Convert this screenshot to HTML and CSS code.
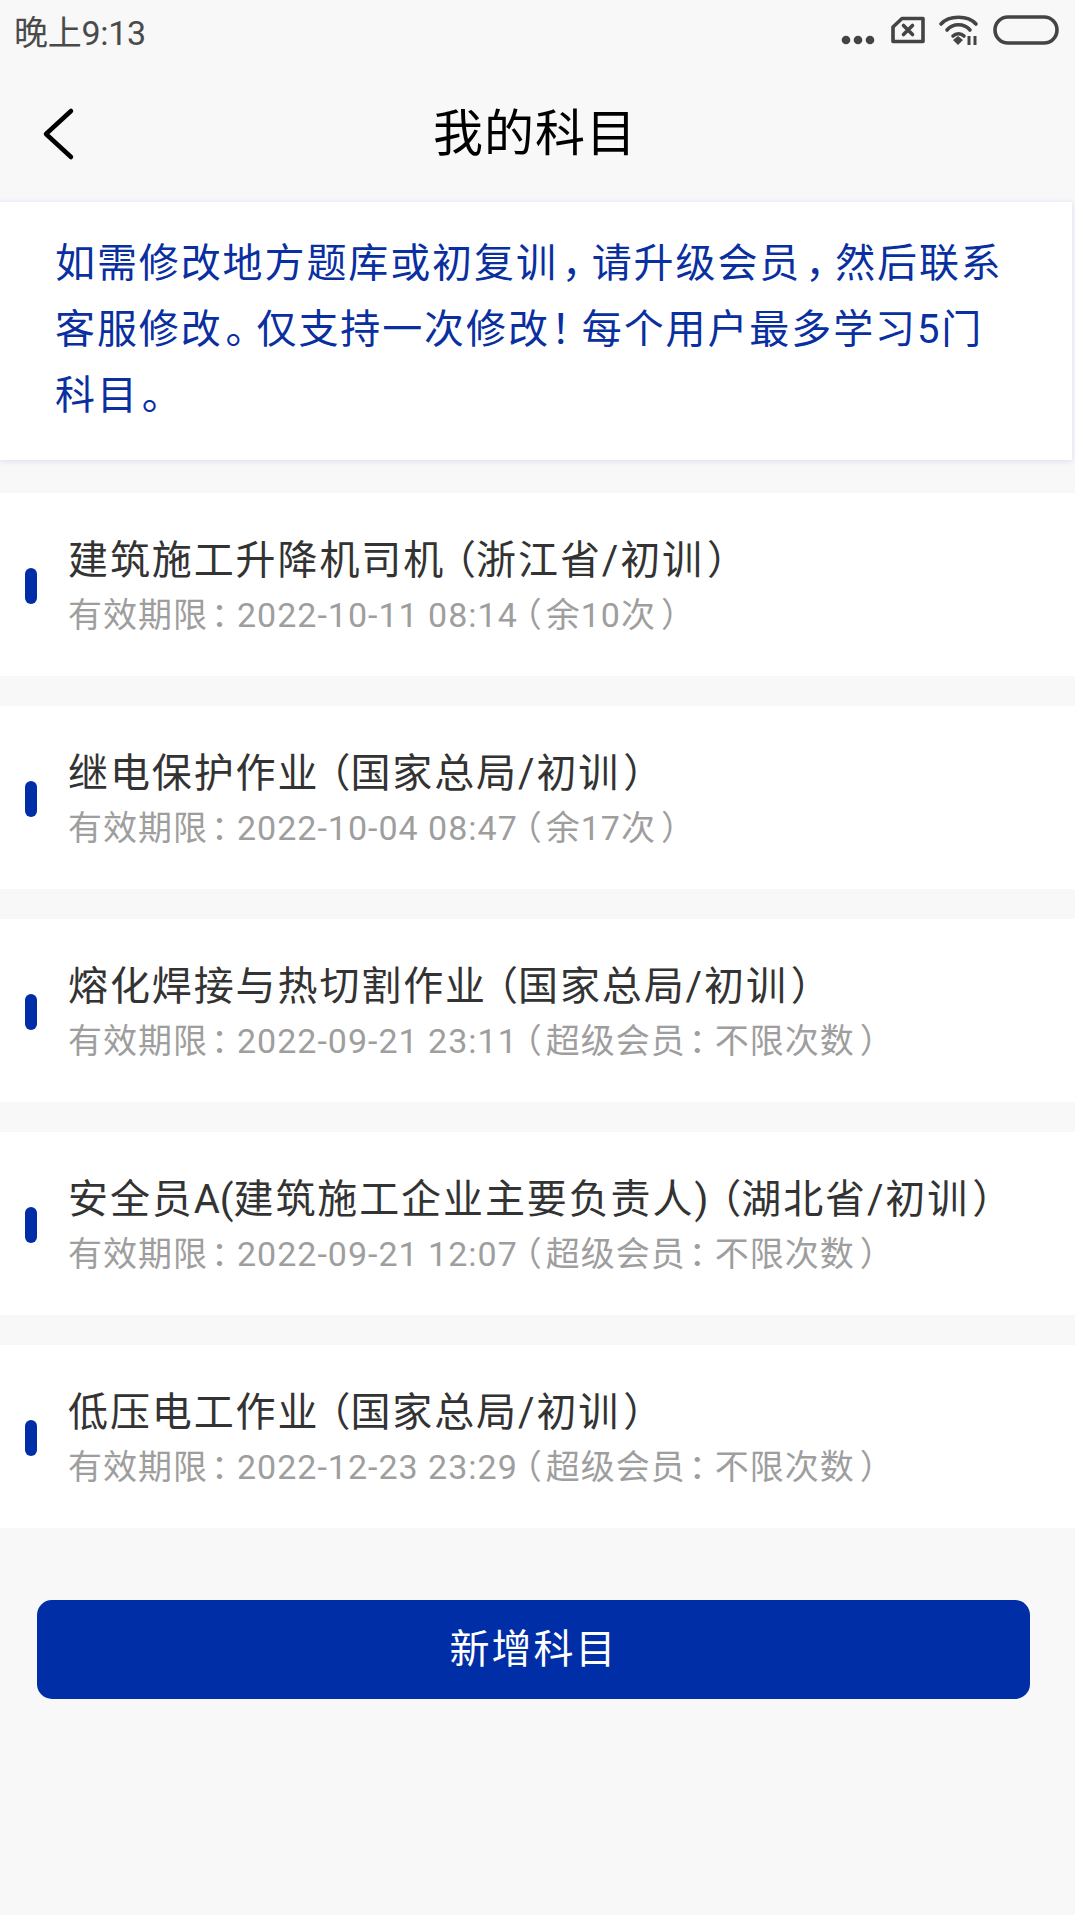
FILE: index.html
```html
<!DOCTYPE html>
<html lang="zh-CN">
<head>
<meta charset="utf-8">
<title>我的科目</title>
<link rel="stylesheet" href="styles.css">
</head>
<body>
<div class="status">
  <span class="time">晚上9:13</span>
  <div class="status-icons">
    <svg class="ic-dots" width="36" height="12" viewBox="0 0 36 12"><circle cx="6" cy="6" r="4.3"/><circle cx="18" cy="6" r="4.3"/><circle cx="30" cy="6" r="4.3"/></svg>
    <svg class="ic-sim" width="36" height="28" viewBox="0 0 36 28"><path class="ln" d="M12 2.5H33V25.5H3V11Z"/><path class="ln" d="M13.5 9.5L22.5 18.5M22.5 9.5L13.5 18.5"/></svg>
    <svg class="ic-wifi" width="42" height="32" viewBox="0 0 42 32"><path class="ln" d="M3 10C11 1 30 1 38 10M9 16C15 9 26 9 32 16M15 22C18 19 23 19 26 22"/><path class="fl" d="M15 26L20 22L25 26L20 31Z"/><path class="thin" d="M31 22V31M37 22V31"/></svg>
    <svg class="ic-batt" width="66" height="30" viewBox="0 0 66 30"><rect class="ln" x="2" y="2" width="62" height="26" rx="13"/></svg>
  </div>
</div>
<header class="nav">
  <svg class="back" width="34" height="54" viewBox="0 0 34 54"><path d="M30 4L5 27L30 50"/></svg>
  <h1 class="nav-title">我的科目</h1>
</header>
<main>
  <section class="notice">如需修改地方题库或初复训<span class="comma">，</span>请升级会员<span class="comma">，</span>然后联系客服修改<span class="stop">。</span>仅支持一次修改<span class="bang">！</span>每个用户最多学习5门科目<span class="stop">。</span></section>
  <ul class="list">
    <li class="item"><i class="mark"></i><div class="text"><div class="name">建筑施工升降机司机<span class="pl">（</span>浙江省/初训<span class="pr">）</span></div><div class="meta">有效期限<span class="colon">：</span>2022-10-11 08:14<span class="pl">（</span>余10次<span class="pr">）</span></div></div></li>
    <li class="item"><i class="mark"></i><div class="text"><div class="name">继电保护作业<span class="pl">（</span>国家总局/初训<span class="pr">）</span></div><div class="meta">有效期限<span class="colon">：</span>2022-10-04 08:47<span class="pl">（</span>余17次<span class="pr">）</span></div></div></li>
    <li class="item"><i class="mark"></i><div class="text"><div class="name">熔化焊接与热切割作业<span class="pl">（</span>国家总局/初训<span class="pr">）</span></div><div class="meta">有效期限<span class="colon">：</span>2022-09-21 23:11<span class="pl">（</span>超级会员<span class="colon">：</span>不限次数<span class="pr">）</span></div></div></li>
    <li class="item"><i class="mark"></i><div class="text"><div class="name">安全员<span class="latin">A(</span>建筑施工企业主要负责人)<span class="pl">（</span>湖北省/初训<span class="pr">）</span></div><div class="meta">有效期限<span class="colon">：</span>2022-09-21 12:07<span class="pl">（</span>超级会员<span class="colon">：</span>不限次数<span class="pr">）</span></div></div></li>
    <li class="item"><i class="mark"></i><div class="text"><div class="name">低压电工作业<span class="pl">（</span>国家总局/初训<span class="pr">）</span></div><div class="meta">有效期限<span class="colon">：</span>2022-12-23 23:29<span class="pl">（</span>超级会员<span class="colon">：</span>不限次数<span class="pr">）</span></div></div></li>
  </ul>
  <button class="add">新增科目</button>
</main>
</body>
</html>
```
FILE: styles.css
```css
* { box-sizing: border-box; }
html, body { margin: 0; padding: 0; }
body {
  width: 1075px;
  height: 1915px;
  overflow: hidden;
  background: #f8f8f9;
  font-family: Roboto, "Noto Sans CJK SC", sans-serif;
}
.status {
  height: 60px;
  padding: 0 16px 0 14px;
  display: flex;
  justify-content: space-between;
  align-items: center;
}
.time { font-size: 34px; letter-spacing: -0.3px; line-height: 40px; margin-top: 6px; color: #4a4a4a; }
.status-icons { display: flex; align-items: center; }
.status-icons svg { display: block; fill: #444; }
.ic-dots { margin-top: 20px; }
.ic-sim { margin-left: 14px; }
.ic-wifi { margin-left: 12px; }
.ic-batt { margin-left: 13px; }
.ln { fill: none; stroke: #444; stroke-width: 3.6; stroke-linecap: round; stroke-linejoin: round; }
.thin { fill: none; stroke: #444; stroke-width: 3; }
.fl { fill: #444; }
.nav {
  height: 142px;
  padding: 0 5px 4px 0;
  position: relative;
  display: flex;
  align-items: center;
  justify-content: center;
}
.back { position: absolute; left: 41px; top: 47px; fill: none; stroke: #000; stroke-width: 4.5; stroke-linecap: round; stroke-linejoin: round; }
.nav-title { margin: 0; font-size: 50px; font-weight: 400; color: #000; letter-spacing: 1px; }
.notice {
  width: 1072px;
  height: 258px;
  padding: 29px 50px 0 55px;
  background: #fff;
  color: #0a2fa0;
  font-size: 40px;
  letter-spacing: 1.9px;
  line-height: 66px;
  box-shadow: 0 1px 6px #d8dcee;
}
.comma, .stop, .bang, .pl, .pr, .colon { font-feature-settings: "halt"; }
.comma { margin: 0 8px 0 4px; }
.stop { margin: 0 9px 0 3px; }
.bang { margin: 0 9px 0 1px; }
.list { list-style: none; margin: 33px 0 0; padding: 0; display: flex; flex-direction: column; gap: 30px; }
.item {
  height: 183px;
  background: #fff;
  display: flex;
  align-items: center;
  padding-left: 25px;
  gap: 31px;
}
.text { padding-top: 5px; }
.mark { display: block; width: 12px; height: 36px; border-radius: 6px; background: #002ea6; margin-top: 3px; }
.name { font-size: 40px; letter-spacing: 1.9px; color: #333; line-height: 56px; white-space: nowrap; }
.latin { letter-spacing: 0; }
.meta { font-size: 34px; letter-spacing: 1px; color: #9e9e9e; line-height: 52px; white-space: nowrap; }
.pl { margin-left: 11px; letter-spacing: 0; }
.pr { margin-left: 3px; }
.meta .pl { margin: 0 3px 0 7px; letter-spacing: 1px; }
.meta .pr { margin-left: 5px; }
.colon { margin: 0 8px 0 3px; }
.add {
  display: block;
  width: 993px;
  height: 99px;
  margin: 72px 0 0 37px;
  padding: 0 0 7px;
  border: 0;
  border-radius: 15px;
  background: #002ea6;
  color: #fff;
  font-family: inherit;
  font-size: 40px;
  letter-spacing: 2px;
}
```
